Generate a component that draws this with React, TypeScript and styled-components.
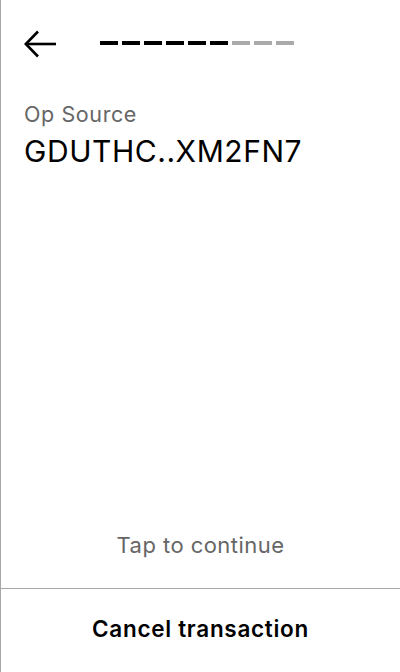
import React from "react";
import styled, { createGlobalStyle } from "styled-components";

const Global = createGlobalStyle`
  html, body { margin: 0; padding: 0; background: #fff; }
  body { font-family: Inter, "Noto Sans", sans-serif; }
`;

const Screen = styled.div`
  box-sizing: border-box;
  height: 672px;
  width: 400px;
  border-left: 1px solid #a8a8a8;
  display: flex;
  flex-direction: column;
  color: #000;
`;

const Header = styled.div`
  display: flex;
  align-items: center;
  padding: 30px 23px 0 23px;
  height: 28px;
  gap: 44px;
`;

const BackButton = styled.button`
  border: none;
  background: none;
  padding: 0;
  width: 32px;
  height: 28px;
  display: flex;
  cursor: pointer;
`;

const Progress = styled.div`
  display: flex;
  gap: 4px;
  margin-top: -3px;
`;

const Dash = styled.div<{ $done: boolean }>`
  width: 18px;
  height: 4px;
  background: ${(p) => (p.$done ? "#000" : "#aaaaaa")};
`;

const Content = styled.div`
  flex: 1;
  padding: 42px 23px 0 23px;
`;

const Label = styled.div`
  font-size: 21.5px;
  line-height: 28px;
  letter-spacing: 0.6px;
  color: #666;
`;

const Value = styled.div`
  font-size: 30px;
  line-height: 36px;
  letter-spacing: 0.55px;
  margin-top: 5px;
  color: #000;
`;

const Hint = styled.div`
  text-align: center;
  font-size: 22px;
  letter-spacing: 0.45px;
  color: #666;
  line-height: 28px;
  padding-bottom: 29px;
`;

const CancelButton = styled.button`
  border: none;
  border-top: 1px solid #a8a8a8;
  background: #fff;
  height: 84px;
  width: 100%;
  padding: 0 0 4px 0;
  font-family: Inter, sans-serif;
  font-size: 22.5px;
  font-weight: 600;
  letter-spacing: 0.7px;
  color: #000;
  cursor: pointer;
`;

export default function App() {
  const steps = [1, 1, 1, 1, 1, 1, 0, 0, 0];
  return (
    <>
      <Global />
      <Screen>
        <Header>
          <BackButton aria-label="Back">
            <svg width="32" height="28" viewBox="0 0 32 28" fill="none">
              <path d="M32 14H2.5" stroke="#000" strokeWidth="2.6" />
              <path d="M14 1.5L1.8 14L14 26.5" stroke="#000" strokeWidth="2.6" />
            </svg>
          </BackButton>
          <Progress>
            {steps.map((s, i) => (
              <Dash key={i} $done={s === 1} />
            ))}
          </Progress>
        </Header>
        <Content>
          <Label>Op Source</Label>
          <Value>GDUTHC..XM2FN7</Value>
        </Content>
        <Hint>Tap to continue</Hint>
        <CancelButton>Cancel transaction</CancelButton>
      </Screen>
    </>
  );
}
